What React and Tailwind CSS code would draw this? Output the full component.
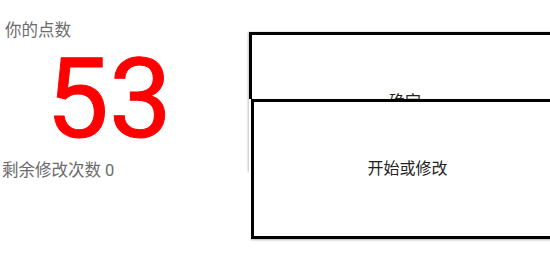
export default function App() {
  const font = { fontFamily: 'Roboto, "Noto Sans CJK SC", sans-serif' };
  return (
    <div className="flex w-[550px] h-[253px] overflow-hidden bg-white" style={font}>
      <div className="flex flex-col w-[249px] shrink-0 pt-[19px]">
        <div className="pl-[5px] text-[16.5px] leading-[24px] text-[#6b6b6b]">你的点数</div>
        <div className="pl-[46px] text-[112px] leading-none text-[#ff0000] [-webkit-text-stroke:1px_#ff0000]">53</div>
        <div className="pl-[2px] mt-[4px] text-[16.5px] leading-[24px] text-[#6b6b6b]">剩余修改次数 0</div>
      </div>
      <div className="flex flex-col items-start shrink-0 pt-[32px]">
        <div className="flex items-center justify-center w-[312px] h-[140px] border-[3px] border-black bg-white text-[16px] text-[#222] shadow-[-1px_0_2px_rgba(0,0,0,0.25)]">
          确定
        </div>
        <div className="relative flex items-center justify-center w-[313px] h-[140px] -mt-[73px] ml-[2px] border-[3px] border-black bg-white text-[16px] text-[#222] shadow-[-2px_0_0_#fff,0_1px_2px_rgba(0,0,0,0.3)]">
          开始或修改
        </div>
      </div>
    </div>
  );
}
